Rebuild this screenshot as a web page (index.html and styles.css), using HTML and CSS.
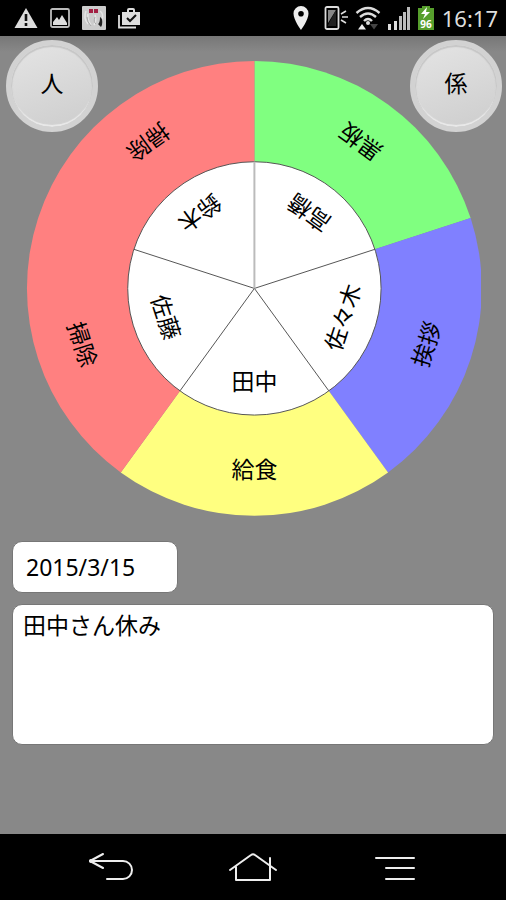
FILE: index.html
```html
<!DOCTYPE html>
<html lang="ja">
<head>
  <meta charset="UTF-8" />
  <meta name="viewport" content="width=device-width, initial-scale=1" />
  <title>当番表</title>
  <link rel="stylesheet" href="styles.css">
</head>
<body>

<header class="status-bar">
  <div class="status-group notices">
    <svg width="24" height="24" viewBox="0 0 24 24" aria-hidden="true">
      <path d="M12 2L23.500 22H.5z" fill="#ddd"/>
      <path d="M12 8v7M12 17v3" stroke="#111" stroke-width="2.600"/>
    </svg>
    <svg width="20" height="20" viewBox="0 0 20 20" aria-hidden="true">
      <rect x="1" y="1" width="18" height="18" rx="1.500" fill="none" stroke="#bbb" stroke-width="1.800"/>
      <path d="M3 17v-3l4-5 2 3 3-5 5 8v2z" fill="#ddd"/>
    </svg>
    <svg width="24" height="24" viewBox="0 0 24 24" aria-hidden="true">
      <rect width="24" height="24" rx="1" fill="#ccc"/>
      <path d="M4 5q-3 7 2 13M6 8q-1 5 3 11M13 9q2 5-1 10M18 5q4 3 2 8" fill="none" stroke="#e6e6e6" stroke-width="1.500"/>
      <path d="M5 11q0 5 4 9M13 11q-2 5 1 7" fill="none" stroke="#aaa"/>
      <path d="M7 3h4v4H7zM12 3h4v4h-4z" fill="#a32043"/>
      <path d="M18 11q3 1 2 8l-1 2-3-3q2-1 2-7z" fill="#222"/>
    </svg>
    <svg width="22" height="22" viewBox="0 0 22 22" aria-hidden="true">
      <path d="M1 8v12.500h17" fill="none" stroke="#ddd" stroke-width="1.800"/>
      <path d="M4 5h5V3q0-2 2-2h4q2 0 2 2v2h5v13H4zM11 5h4V3h-4z" fill="#ddd" fill-rule="evenodd"/>
      <path d="M9 11l3 3 6-6" fill="none" stroke="#111" stroke-width="2"/>
    </svg>
  </div>
  <div class="status-group">
    <svg class="pin" width="16" height="24" viewBox="0 0 16 24" aria-hidden="true">
      <path d="M8 0a7.500 7.500 0 0 0-7.500 7.500C.5 14 8 24 8 24s7.500-10 7.500-16.500A7.500 7.500 0 0 0 8 0zm0 5a2.800 2.800 0 1 1 0 5.600A2.800 2.800 0 0 1 8 5z" fill="#eee"/>
    </svg>
    <svg width="24" height="24" viewBox="0 0 24 24" aria-hidden="true">
      <rect x="1.500" y="1" width="13" height="22" rx="1.500" fill="none" stroke="#ddd" stroke-width="1.800"/>
      <path d="M4 4h8L4 17z" fill="#888"/>
      <path d="M12 4L4 19v1h8z" fill="#222"/>
      <path d="M17 8l5-3M18 11h6M17 14l5 3" stroke="#ddd" stroke-width="1.600"/>
    </svg>
    <svg width="26" height="24" viewBox="0 0 26 24" aria-hidden="true">
      <path d="M1.500 7q11.500-10 23 0M5 11q8-7 16 0M9 15q4-4 8 0" fill="none" stroke="#ddd" stroke-width="2.400"/>
      <circle cx="13" cy="17" r="2" fill="#ddd"/>
      <path d="M3 23.500l4-5.500 4 5.500z" fill="#eee"/>
      <path d="M15 18h8l-4 5.500z" fill="#444"/>
    </svg>
    <svg width="22" height="24" viewBox="0 0 22 24" aria-hidden="true">
      <path d="M0 18h3v6H0zM6 15h3v9H6z" fill="#ddd"/>
      <path d="M11 10h3v14h-3zM15 6h3v18h-3zM19 1h3v23h-3z" fill="#bbb"/>
    </svg>
    <svg class="battery" width="18" height="24" viewBox="0 0 18 24" aria-label="96%">
      <path d="M1 2h4V0h8v2h4v22H1z" fill="#569e2c"/>
      <path d="M10 1L4 8h4l-2 5 7-7H9z" fill="#fff"/>
      <text x="9" y="22" text-anchor="middle">96</text>
    </svg>
    <time class="clock">16:17</time>
  </div>
</header>

<main class="board">
  <div class="dial">
    <button class="round-btn" type="button">人</button>
    <svg class="wheel" viewBox="-230 -229 458 458" role="img" aria-label="当番表">
      <!-- outer ring: jobs -->
      <path class="green" d="M0 0V-228A228 228 0 0 1 216.800 -70.500z"/>
      <path class="blue" d="M0 0L216.800 -70.500A228 228 0 0 1 134 184.500z"/>
      <path class="yellow" d="M0 0L134 184.500A228 228 0 0 1 -134 184.500z"/>
      <path class="red" d="M0 0L-134 184.500A228 228 0 0 1 0 -228z"/>
      <text y="190">給食</text>
      <text y="190" transform="rotate(-72)">挨拶</text>
      <text y="190" transform="rotate(-144)">黒板</text>
      <text y="190" transform="rotate(144)">掃除</text>
      <text y="190" transform="rotate(72)">掃除</text>
      <!-- inner disc: people -->
      <circle class="disc" r="127"/>
      <path class="spokes" d="M0 0L120.800 -39.200M0 0L74.600 102.700M0 0L-74.600 102.700M0 0L-120.800 -39.200"/>
      <path class="spokes top" d="M0 0V-127"/>
      <text y="102">田中</text>
      <text y="102" transform="rotate(-72)">佐々木</text>
      <text y="102" transform="rotate(-144)">高橋</text>
      <text y="102" transform="rotate(144)">鈴木</text>
      <text y="102" transform="rotate(72)">佐藤</text>
    </svg>
    <button class="round-btn right" type="button">係</button>
  </div>

  <form class="notes">
    <input class="field date" type="text" value="2015/3/15" aria-label="日付" />
    <textarea class="field memo" aria-label="メモ">田中さん休み</textarea>
  </form>
</main>

<nav class="nav-bar">
  <button type="button" aria-label="戻る">
    <svg width="48" height="36" viewBox="0 0 48 36">
      <path d="M17 5L4 12l13 7M4 12h33a9 9 0 0 1 0 18H21"/>
      <circle cx="5" cy="12" r="2"/>
    </svg>
  </button>
  <button type="button" aria-label="ホーム">
    <svg width="48" height="36" viewBox="0 0 48 36">
      <path d="M1 21L22 6q2-1.500 4 0l21 15M7 18v13h34V9"/>
    </svg>
  </button>
  <button type="button" aria-label="メニュー">
    <svg width="48" height="36" viewBox="0 0 48 36">
      <path d="M4 9h38M14 19h28M14 30h28"/>
    </svg>
  </button>
</nav>

</body>
</html>
```
FILE: styles.css
```css
* {
  box-sizing: border-box;
}
body {
  margin: 0;
  min-height: 100vh;
  display: flex;
  flex-direction: column;
  background: #888;
  color: #000;
  font-family: "Noto Sans", "Noto Sans CJK JP", sans-serif;
}
button {
  border: none;
  cursor: pointer;
  font-family: inherit;
}

.status-bar {
  display: flex;
  justify-content: space-between;
  align-items: center;
  height: 36px;
  padding: 0 8px 0 14px;
  background: #000;
}
.status-group {
  display: flex;
  align-items: center;
  gap: 7px;
}
.notices {
  gap: 12px;
}
.pin {
  margin-right: 8px;
}
.battery text {
  fill: #fff;
  font-size: 10px;
  font-weight: 700;
}
.clock {
  color: #ddd;
  font-size: 22px;
  line-height: 36px;
}

.board {
  flex: 1;
  padding: 4px 12px 12px;
  background: linear-gradient(#777, #888 16px);
}

/* wheel and buttons share one grid cell */
.dial {
  display: grid;
  margin: 0 -10px 24px;
}
.dial > * {
  grid-area: 1 / 1;
}
.wheel {
  width: 91%;
  margin-top: 20px;
  justify-self: center;
}
.wheel text {
  font-size: 23px;
  text-anchor: middle;
}
.green {
  fill: #80ff80;
}
.blue {
  fill: #8080ff;
}
.yellow {
  fill: #ffff80;
}
.red {
  fill: #ff8080;
}
.disc {
  fill: #fff;
  stroke: #555;
}
.spokes {
  fill: none;
  stroke: #555;
}
.spokes.top {
  stroke: #bbb;
  stroke-width: 2;
}

.round-btn {
  z-index: 1;
  width: 92px;
  height: 92px;
  margin: 0 2px 0 4px;
  padding: 0 0 8px;
  border: 5px solid #d2d2d2;
  border-radius: 50%;
  background: linear-gradient(160deg, #e4e4e4, #cdcdcd);
  box-shadow: inset 0 1px 1px 1px #c6c6c6, inset 0 -2px 1px #ececec;
  color: #000;
  font-size: 23px;
}
.round-btn.right {
  justify-self: end;
}

.notes {
  display: flex;
  flex-direction: column;
  align-items: flex-start;
  gap: 11px;
}
.field {
  border: 1px solid #777;
  border-radius: 10px;
  background: #fff;
  color: #000;
  font-family: inherit;
  font-size: 23px;
  line-height: 32px;
}
.date {
  width: 166px;
  height: 52px;
  padding: 8px 13px;
}
.memo {
  width: 100%;
  height: 141px;
  padding: 4px 10px;
  resize: none;
}

.nav-bar {
  display: grid;
  grid-template-columns: repeat(3, 1fr);
  height: 66px;
  padding: 0 39px;
  background: #000;
}
.nav-bar button {
  display: flex;
  align-items: center;
  justify-content: center;
  padding: 0;
  background: none;
}
.nav-bar path {
  fill: none;
  stroke: #eee;
  stroke-width: 2;
  stroke-linecap: round;
  stroke-linejoin: round;
}
.nav-bar circle {
  fill: #eee;
}
```
